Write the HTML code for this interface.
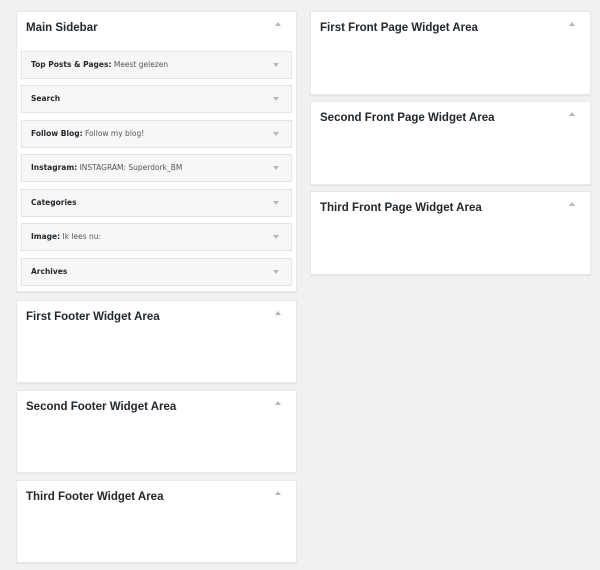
<!DOCTYPE html>
<html><head><style>
body{margin:0;width:600px;height:570px;background:#f1f1f1;font-family:"DejaVu Sans","Liberation Sans",sans-serif;position:relative;overflow:hidden}
.p{position:absolute;background:#fff;box-shadow:0 1px 1px rgba(0,0,0,.06);border:1px solid #e8e8e8;box-sizing:border-box;width:281px}
.p h3{margin:0;position:absolute;left:9px;top:10px;font-family:"Liberation Sans",sans-serif;font-size:11.5px;font-weight:bold;color:#23282d}
.up{position:absolute;right:15px;top:10px;width:0;height:0;border-left:3px solid transparent;border-right:3px solid transparent;border-bottom:4px solid #b4b9be}
.w{position:absolute;left:4px;width:271px;height:28px;background:#f7f7f7;border:1px solid #e5e5e5;box-sizing:border-box;font-size:7.5px;line-height:26px;padding-left:9px;color:#23282d}
.w b{font-weight:bold}
.w span{color:#555}
.w i{position:absolute;right:12px;top:11px;width:0;height:0;border-left:3px solid transparent;border-right:3px solid transparent;border-top:4px solid #b4b9be}
</style></head><body>
<div class="p" style="left:16px;top:11px;height:281px"><h3>Main Sidebar</h3><div class="up"></div>
<div class="w" style="top:39px"><b>Top Posts &amp; Pages:</b> <span>Meest gelezen</span><i></i></div>
<div class="w" style="top:73px"><b>Search</b><i></i></div>
<div class="w" style="top:108px"><b>Follow Blog:</b> <span>Follow my blog!</span><i></i></div>
<div class="w" style="top:142px"><b>Instagram:</b> <span>INSTAGRAM: Superdork_BM</span><i></i></div>
<div class="w" style="top:177px"><b>Categories</b><i></i></div>
<div class="w" style="top:211px"><b>Image:</b> <span>Ik lees nu:</span><i></i></div>
<div class="w" style="top:246px"><b>Archives</b><i></i></div>
</div>
<div class="p" style="left:16px;top:300px;height:83px"><h3>First Footer Widget Area</h3><div class="up"></div></div>
<div class="p" style="left:16px;top:390px;height:83px"><h3>Second Footer Widget Area</h3><div class="up"></div></div>
<div class="p" style="left:16px;top:480px;height:83px"><h3>Third Footer Widget Area</h3><div class="up"></div></div>
<div class="p" style="left:310px;top:11px;height:84px"><h3>First Front Page Widget Area</h3><div class="up"></div></div>
<div class="p" style="left:310px;top:101px;height:84px"><h3>Second Front Page Widget Area</h3><div class="up"></div></div>
<div class="p" style="left:310px;top:191px;height:84px"><h3>Third Front Page Widget Area</h3><div class="up"></div></div>
</body></html>
